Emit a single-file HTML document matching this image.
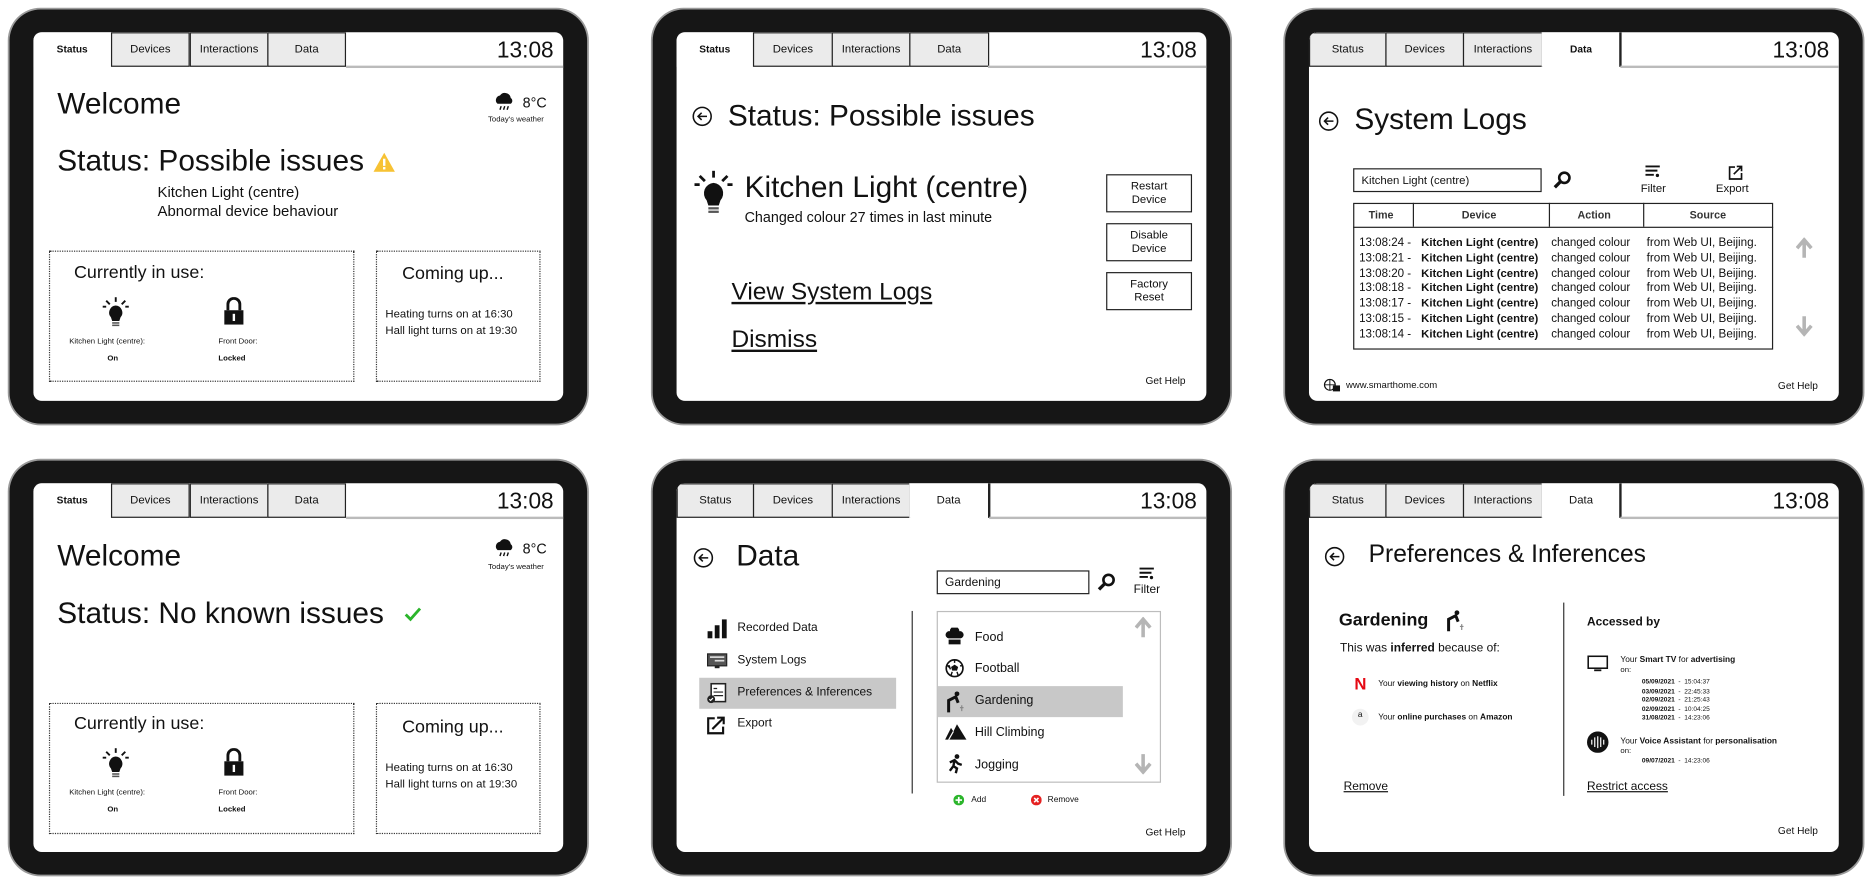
<!DOCTYPE html>
<html><head><meta charset="utf-8"><style>
*{margin:0;padding:0;box-sizing:border-box}
html,body{width:1871px;height:885px;overflow:hidden;background:#fff;font-family:"Liberation Sans",sans-serif;color:#111}
#w{position:absolute;left:0;top:0;width:1568px;height:742px;transform:scale(1.19324);transform-origin:0 0}
.bz{position:absolute;width:484px;height:347px;background:#161616;border-radius:26px;box-shadow:0 0 0 1.5px #9a9a9a}
.sc{position:absolute;width:444px;height:309px;background:#fff;border-radius:7px;overflow:hidden}
.a{position:absolute;line-height:1;white-space:nowrap}
.tab{position:absolute;top:0;height:29px;background:#ebebeb;border:1px solid #222;font-size:9.5px;text-align:center;line-height:27px}
.tab.on{background:#fff;border-color:transparent;font-weight:bold}
.tl{position:absolute;top:28px;height:1.5px;background:#bbb}
.tm{position:absolute;right:8px;top:5px;font-size:19px}
.dot{position:absolute;border:1.3px dotted #333}
.u{text-decoration:underline}
.b{font-weight:bold}
.btn{position:absolute;left:360px;width:72px;height:32px;border:1.3px solid #222;font-size:9.5px;text-align:center;line-height:11px;padding-top:4px}
</style></head><body><div id="w">

<div class="bz" style="left:8px;top:8px"></div>
<div class="bz" style="left:547px;top:8px"></div>
<div class="bz" style="left:1077px;top:8px"></div>
<div class="bz" style="left:8px;top:386px"></div>
<div class="bz" style="left:547px;top:386px"></div>
<div class="bz" style="left:1077px;top:386px"></div>

<!-- T1 -->
<div class="sc" style="left:28px;top:27px">
 <div class="tab on" style="left:0;width:65px;font-size:8.5px">Status</div>
 <div class="tab" style="left:65px;width:66px">Devices</div>
 <div class="tab" style="left:131px;width:66px">Interactions</div>
 <div class="tab" style="left:196px;width:66px">Data</div>
 <div class="tl" style="left:262px;width:182px"></div>
 <div class="tm">13:08</div>
 <div class="a" style="left:20px;top:48px;font-size:25px">Welcome</div>
 <svg class="a" style="left:386px;top:49px" width="18" height="18" viewBox="0 0 18 18"><path d="M3 11a4 4 0 0 1 2-7 5 5 0 0 1 9 2 3 3 0 0 1 0 5z" fill="#111"/><path d="M6 13l-1 3M9 13l-1 3M12 13l-1 3" stroke="#111" stroke-width="1.2"/></svg>
 <div class="a" style="left:410px;top:53px;font-size:12px">8°C</div>
 <div class="a" style="left:381px;top:71px;font-size:6.5px">Today's weather</div>
 <div class="a" style="left:20px;top:96px;font-size:25px">Status: Possible issues</div>
 <svg class="a" style="left:285px;top:101px" width="18" height="16" viewBox="0 0 18 16"><path d="M9 0L18 16H0z" fill="#f7c234"/><rect x="8" y="5" width="2" height="6" fill="#fff"/><rect x="8" y="12" width="2" height="2" fill="#fff"/></svg>
 <div class="a" style="left:104px;top:128px;font-size:12.5px">Kitchen Light (centre)</div>
 <div class="a" style="left:104px;top:144px;font-size:12.5px">Abnormal device behaviour</div>
 <div class="dot" style="left:13px;top:183px;width:256px;height:110px"></div>
 <div class="dot" style="left:287px;top:183px;width:138px;height:110px"></div>
 <div class="a" style="left:34px;top:194px;font-size:15px">Currently in use:</div>
 <svg class="a" style="left:58px;top:222px" width="22" height="26" viewBox="0 0 22 26"><path d="M11 0v4M3 3l3 3M19 3l-3 3M0 8h3M22 8h-3" stroke="#111" stroke-width="1.6"/><path d="M11 7a6 6 0 0 0-4 10l1 3h6l1-3a6 6 0 0 0-4-10z" fill="#111"/><rect x="8" y="21" width="6" height="1.3" fill="#555"/><rect x="8" y="23" width="6" height="1.3" fill="#555"/></svg>
 <svg class="a" style="left:159px;top:222px" width="18" height="24" viewBox="0 0 18 24"><path d="M4 11V6a5 5 0 0 1 10 0v5" stroke="#111" stroke-width="2.4" fill="none"/><rect x="1" y="11" width="16" height="12" fill="#111"/><rect x="8" y="14" width="2" height="6" fill="#fff"/></svg>
 <div class="a" style="left:30px;top:257px;font-size:6.5px">Kitchen Light (centre):</div>
 <div class="a b" style="left:62px;top:271px;font-size:6.5px">On</div>
 <div class="a" style="left:155px;top:257px;font-size:6.5px">Front Door:</div>
 <div class="a b" style="left:155px;top:271px;font-size:6.5px">Locked</div>
 <div class="a" style="left:309px;top:195px;font-size:15px">Coming up...</div>
 <div class="a" style="left:295px;top:232px;font-size:9.5px">Heating turns on at 16:30</div>
 <div class="a" style="left:295px;top:246px;font-size:9.5px">Hall light turns on at 19:30</div>
</div>

<!-- T4 -->
<div class="sc" style="left:28px;top:405px">
 <div class="tab on" style="left:0;width:65px;font-size:8.5px">Status</div>
 <div class="tab" style="left:65px;width:66px">Devices</div>
 <div class="tab" style="left:131px;width:66px">Interactions</div>
 <div class="tab" style="left:196px;width:66px">Data</div>
 <div class="tl" style="left:262px;width:182px"></div>
 <div class="tm">13:08</div>
 <div class="a" style="left:20px;top:49px;font-size:25px">Welcome</div>
 <svg class="a" style="left:386px;top:45px" width="18" height="18" viewBox="0 0 18 18"><path d="M3 11a4 4 0 0 1 2-7 5 5 0 0 1 9 2 3 3 0 0 1 0 5z" fill="#111"/><path d="M6 13l-1 3M9 13l-1 3M12 13l-1 3" stroke="#111" stroke-width="1.2"/></svg>
 <div class="a" style="left:410px;top:49px;font-size:12px">8°C</div>
 <div class="a" style="left:381px;top:68px;font-size:6.5px">Today's weather</div>
 <div class="a" style="left:20px;top:97px;font-size:25px">Status: No known issues</div>
 <svg class="a" style="left:311px;top:104px" width="14" height="12" viewBox="0 0 14 12"><path d="M1 6l4 4 8-9" stroke="#2bb52b" stroke-width="2.4" fill="none"/></svg>
 <div class="dot" style="left:13px;top:184px;width:256px;height:110px"></div>
 <div class="dot" style="left:287px;top:184px;width:138px;height:110px"></div>
 <div class="a" style="left:34px;top:194px;font-size:15px">Currently in use:</div>
 <svg class="a" style="left:58px;top:222px" width="22" height="26" viewBox="0 0 22 26"><path d="M11 0v4M3 3l3 3M19 3l-3 3M0 8h3M22 8h-3" stroke="#111" stroke-width="1.6"/><path d="M11 7a6 6 0 0 0-4 10l1 3h6l1-3a6 6 0 0 0-4-10z" fill="#111"/><rect x="8" y="21" width="6" height="1.3" fill="#555"/><rect x="8" y="23" width="6" height="1.3" fill="#555"/></svg>
 <svg class="a" style="left:159px;top:222px" width="18" height="24" viewBox="0 0 18 24"><path d="M4 11V6a5 5 0 0 1 10 0v5" stroke="#111" stroke-width="2.4" fill="none"/><rect x="1" y="11" width="16" height="12" fill="#111"/><rect x="8" y="14" width="2" height="6" fill="#fff"/></svg>
 <div class="a" style="left:30px;top:257px;font-size:6.5px">Kitchen Light (centre):</div>
 <div class="a b" style="left:62px;top:271px;font-size:6.5px">On</div>
 <div class="a" style="left:155px;top:257px;font-size:6.5px">Front Door:</div>
 <div class="a b" style="left:155px;top:271px;font-size:6.5px">Locked</div>
 <div class="a" style="left:309px;top:197px;font-size:15px">Coming up...</div>
 <div class="a" style="left:295px;top:234px;font-size:9.5px">Heating turns on at 16:30</div>
 <div class="a" style="left:295px;top:248px;font-size:9.5px">Hall light turns on at 19:30</div>
</div>

<!-- T2 -->
<div class="sc" style="left:567px;top:27px">
 <div class="tab on" style="left:0;width:64px;font-size:8.5px">Status</div>
 <div class="tab" style="left:64px;width:67px">Devices</div>
 <div class="tab" style="left:130px;width:66px">Interactions</div>
 <div class="tab" style="left:195px;width:67px">Data</div>
 <div class="tl" style="left:261px;width:183px"></div>
 <div class="tm">13:08</div>
 <svg class="a" style="left:13px;top:62px" width="17" height="17" viewBox="0 0 17 17"><circle cx="8.5" cy="8.5" r="7.5" stroke="#111" stroke-width="1.3" fill="none"/><path d="M12.5 8.5H5M8 5.5l-3 3 3 3" stroke="#111" stroke-width="1.3" fill="none"/></svg>
 <div class="a" style="left:43px;top:58px;font-size:25px">Status: Possible issues</div>
 <svg class="a" style="left:15px;top:116px" width="32" height="38" viewBox="0 0 22 26"><path d="M11 0v4M3 3l3 3M19 3l-3 3M0 8h3M22 8h-3" stroke="#111" stroke-width="1.6"/><path d="M11 7a6 6 0 0 0-4 10l1 3h6l1-3a6 6 0 0 0-4-10z" fill="#111"/><rect x="8" y="21" width="6" height="1.3" fill="#555"/><rect x="8" y="23" width="6" height="1.3" fill="#555"/></svg>
 <div class="a" style="left:57px;top:118px;font-size:25px">Kitchen Light (centre)</div>
 <div class="a" style="left:57px;top:149px;font-size:12px">Changed colour 27 times in last minute</div>
 <div class="btn" style="top:119px">Restart<br>Device</div>
 <div class="btn" style="top:160px">Disable<br>Device</div>
 <div class="btn" style="top:201px">Factory<br>Reset</div>
 <div class="a u" style="left:46px;top:208px;font-size:20.5px">View System Logs</div>
 <div class="a u" style="left:46px;top:248px;font-size:20.5px">Dismiss</div>
 <div class="a" style="left:393px;top:288px;font-size:8.5px">Get Help</div>
</div>

<!-- T3 -->
<div class="sc" style="left:1097px;top:27px">
 <div class="tab" style="left:0;width:65px">Status</div>
 <div class="tab" style="left:64px;width:66px">Devices</div>
 <div class="tab" style="left:129px;width:67px">Interactions</div>
 <div class="tab on" style="left:195px;width:66px;font-size:8.5px">Data</div>
 <div style="position:absolute;left:260px;top:0;width:1.5px;height:29px;background:#222"></div>
 <div class="tl" style="left:261px;width:183px"></div>
 <div class="tm">13:08</div>
 <svg class="a" style="left:8px;top:66px" width="17" height="17" viewBox="0 0 17 17"><circle cx="8.5" cy="8.5" r="7.5" stroke="#111" stroke-width="1.3" fill="none"/><path d="M12.5 8.5H5M8 5.5l-3 3 3 3" stroke="#111" stroke-width="1.3" fill="none"/></svg>
 <div class="a" style="left:38px;top:61px;font-size:25px">System Logs</div>
 <div class="a" style="left:37px;top:114px;width:158px;height:20px;border:1.3px solid #222;font-size:9.5px;padding:5px 0 0 6px">Kitchen Light (centre)</div>
 <svg class="a" style="left:204px;top:116px" width="16" height="16" viewBox="0 0 16 16"><circle cx="10" cy="6" r="4.3" stroke="#111" stroke-width="2.2" fill="none"/><path d="M7 9L2 14" stroke="#111" stroke-width="2.8"/></svg>
 <svg class="a" style="left:281px;top:111px" width="16" height="12" viewBox="0 0 16 12"><path d="M1 1.5h12M1 5h10M1 8.5h7" stroke="#111" stroke-width="1.6"/><circle cx="11" cy="9" r="1.4" fill="#111"/></svg>
 <div class="a" style="left:278px;top:127px;font-size:9.5px">Filter</div>
 <svg class="a" style="left:351px;top:111px" width="13" height="13" viewBox="0 0 13 13"><path d="M6 2H1.5v10h10V7" stroke="#111" stroke-width="1.4" fill="none"/><path d="M5 8l6-6M7.5 1.5H11.5V5.5" stroke="#111" stroke-width="1.4" fill="none"/></svg>
 <div class="a" style="left:341px;top:127px;font-size:9.5px">Export</div>
 <div style="position:absolute;left:37px;top:143px;width:352px;height:123px;border:1.5px solid #222"></div>
 <div style="position:absolute;left:37px;top:163px;width:352px;height:1.3px;background:#222"></div>
 <div style="position:absolute;left:87px;top:143px;width:1.3px;height:20px;background:#222"></div>
 <div style="position:absolute;left:201px;top:143px;width:1.3px;height:20px;background:#222"></div>
 <div style="position:absolute;left:280px;top:143px;width:1.3px;height:20px;background:#222"></div>
 <div class="a b" style="left:50px;top:149px;font-size:9px;color:#333">Time</div>
 <div class="a b" style="left:128px;top:149px;font-size:9px;color:#333">Device</div>
 <div class="a b" style="left:225px;top:149px;font-size:9px;color:#333">Action</div>
 <div class="a b" style="left:319px;top:149px;font-size:9px;color:#333">Source</div>
 <div class="a" style="left:42px;top:171px;font-size:9.7px;line-height:12.8px">13:08:24 -<br>13:08:21 -<br>13:08:20 -<br>13:08:18 -<br>13:08:17 -<br>13:08:15 -<br>13:08:14 -</div>
 <div class="a b" style="left:94px;top:171px;font-size:9.5px;line-height:12.8px">Kitchen Light (centre)<br>Kitchen Light (centre)<br>Kitchen Light (centre)<br>Kitchen Light (centre)<br>Kitchen Light (centre)<br>Kitchen Light (centre)<br>Kitchen Light (centre)</div>
 <div class="a" style="left:203px;top:171px;font-size:9.7px;line-height:12.8px">changed colour<br>changed colour<br>changed colour<br>changed colour<br>changed colour<br>changed colour<br>changed colour</div>
 <div class="a" style="left:283px;top:171px;font-size:9.8px;line-height:12.8px">from Web UI, Beijing.<br>from Web UI, Beijing.<br>from Web UI, Beijing.<br>from Web UI, Beijing.<br>from Web UI, Beijing.<br>from Web UI, Beijing.<br>from Web UI, Beijing.</div>
 <svg class="a" style="left:408px;top:172px" width="14" height="18" viewBox="0 0 14 18"><path d="M7 17V3M1 9l6-7 6 7" stroke="#b5b5b5" stroke-width="3" fill="none"/></svg>
 <svg class="a" style="left:408px;top:237px" width="14" height="18" viewBox="0 0 14 18"><path d="M7 1v14M1 9l6 7 6-7" stroke="#b5b5b5" stroke-width="3" fill="none"/></svg>
 <svg class="a" style="left:12px;top:290px" width="16" height="12" viewBox="0 0 16 12"><circle cx="5.5" cy="5.5" r="4.5" stroke="#111" fill="none"/><path d="M1 5.5h9M5.5 1v9" stroke="#111" stroke-width=".8"/><rect x="8" y="6" width="6" height="5" fill="#111"/></svg>
 <div class="a" style="left:31px;top:292px;font-size:8px">www.smarthome.com</div>
 <div class="a" style="left:393px;top:292px;font-size:8.5px">Get Help</div>
</div>

<!-- T5 -->
<div class="sc" style="left:567px;top:405px">
 <div class="tab" style="left:0;width:65px">Status</div>
 <div class="tab" style="left:64px;width:67px">Devices</div>
 <div class="tab" style="left:130px;width:66px">Interactions</div>
 <div class="tab on" style="left:195px;width:66px;font-weight:normal">Data</div>
 <div style="position:absolute;left:261px;top:0;width:1.5px;height:29px;background:#222"></div>
 <div class="tl" style="left:262px;width:182px"></div>
 <div class="tm">13:08</div>
 <svg class="a" style="left:14px;top:54px" width="17" height="17" viewBox="0 0 17 17"><circle cx="8.5" cy="8.5" r="7.5" stroke="#111" stroke-width="1.3" fill="none"/><path d="M12.5 8.5H5M8 5.5l-3 3 3 3" stroke="#111" stroke-width="1.3" fill="none"/></svg>
 <div class="a" style="left:50px;top:49px;font-size:25px">Data</div>
 <div class="a" style="left:218px;top:73px;width:128px;height:20px;border:1.3px solid #222;font-size:10px;padding:5px 0 0 6px">Gardening</div>
 <svg class="a" style="left:352px;top:75px" width="16" height="16" viewBox="0 0 16 16"><circle cx="10" cy="6" r="4.3" stroke="#111" stroke-width="2.2" fill="none"/><path d="M7 9L2 14" stroke="#111" stroke-width="2.8"/></svg>
 <svg class="a" style="left:387px;top:70px" width="16" height="12" viewBox="0 0 16 12"><path d="M1 1.5h12M1 5h10M1 8.5h7" stroke="#111" stroke-width="1.6"/><circle cx="11" cy="9" r="1.4" fill="#111"/></svg>
 <div class="a" style="left:383px;top:85px;font-size:10px">Filter</div>
 <div style="position:absolute;left:19px;top:163px;width:165px;height:26px;background:#c8c8c8"></div>
 <svg class="a" style="left:25px;top:114px" width="18" height="16" viewBox="0 0 18 16"><rect x="1" y="10" width="4" height="6" fill="#111"/><rect x="7" y="5" width="4" height="11" fill="#111"/><rect x="13" y="0" width="4" height="16" fill="#111"/></svg>
 <svg class="a" style="left:25px;top:142px" width="18" height="14" viewBox="0 0 18 14"><rect x="1" y="1" width="16" height="10" fill="#555" stroke="#222"/><rect x="3" y="3" width="12" height="1.4" fill="#ddd"/><rect x="7" y="6" width="8" height="1.4" fill="#ddd"/><rect x="7" y="11" width="4" height="2" fill="#222"/></svg>
 <svg class="a" style="left:25px;top:167px" width="17" height="19" viewBox="0 0 17 19"><rect x="4" y="1" width="12" height="15" fill="#fff" stroke="#222" stroke-width="1.3"/><path d="M6 5h3M6 8h8M6 11h8" stroke="#222"/><circle cx="4" cy="14" r="3.3" fill="#222"/><path d="M2.5 14l1 1 2-2" stroke="#fff"/></svg>
 <svg class="a" style="left:25px;top:195px" width="16" height="16" viewBox="0 0 16 16"><path d="M7 2H1.5v12.5H14V9" stroke="#111" stroke-width="1.8" fill="none"/><path d="M5 11L14 2M9 1.5h5.5V7" stroke="#111" stroke-width="1.8" fill="none"/></svg>
 <div class="a" style="left:51px;top:117px;font-size:10px">Recorded Data</div>
 <div class="a" style="left:51px;top:144px;font-size:10px">System Logs</div>
 <div class="a" style="left:51px;top:171px;font-size:10px">Preferences &amp; Inferences</div>
 <div class="a" style="left:51px;top:197px;font-size:10px">Export</div>
 <div style="position:absolute;left:197px;top:107px;width:1.3px;height:153px;background:#333"></div>
 <div style="position:absolute;left:218px;top:107px;width:188px;height:144px;border:1.3px solid #bdbdbd"></div>
 <div style="position:absolute;left:219px;top:170px;width:155px;height:26px;background:#c8c8c8"></div>
 <svg class="a" style="left:225px;top:121px" width="16" height="15" viewBox="0 0 16 15"><path d="M3 9a3 3 0 0 1 1-6 4 4 0 0 1 8 0 3 3 0 0 1 1 6z" fill="#111"/><rect x="3" y="10" width="10" height="4" fill="#111"/></svg>
 <svg class="a" style="left:225px;top:147px" width="16" height="16" viewBox="0 0 16 16"><circle cx="8" cy="8" r="7" stroke="#111" stroke-width="1.4" fill="#fff"/><path d="M8 5l3 2-1 3H6L5 7z" fill="#111"/><path d="M1.5 6l2 0 1 3M14.5 6l-2 0M5 14l1-3M11 14l-1-3M8 1v2.5" stroke="#111" stroke-width="1.2"/></svg>
 <svg class="a" style="left:225px;top:174px" width="18" height="19" viewBox="0 0 18 19"><circle cx="10" cy="2.5" r="2" fill="#111"/><path d="M3 18V8l6-3 2 5" stroke="#111" stroke-width="2.5" fill="none"/><path d="M14 12v5M12.5 14h3" stroke="#888"/></svg>
 <svg class="a" style="left:225px;top:201px" width="18" height="14" viewBox="0 0 18 14"><path d="M0 14L5 4l2 3L10 1l8 13z" fill="#111"/><path d="M3 14l4-7" stroke="#fff" stroke-width="1"/></svg>
 <svg class="a" style="left:227px;top:227px" width="14" height="17" viewBox="0 0 14 17"><circle cx="8" cy="2" r="2" fill="#111"/><path d="M2 7l4-2 3 3 3 1M6 5l-1 5 3 2-1 4M5 10l-3 4" stroke="#111" stroke-width="2" fill="none"/></svg>
 <div class="a" style="left:250px;top:124px;font-size:10.5px">Food</div>
 <div class="a" style="left:250px;top:150px;font-size:10.5px">Football</div>
 <div class="a" style="left:250px;top:177px;font-size:10.5px">Gardening</div>
 <div class="a" style="left:250px;top:204px;font-size:10.5px">Hill Climbing</div>
 <div class="a" style="left:250px;top:231px;font-size:10.5px">Jogging</div>
 <svg class="a" style="left:384px;top:112px" width="14" height="18" viewBox="0 0 14 18"><path d="M7 17V3M1 9l6-7 6 7" stroke="#b5b5b5" stroke-width="3" fill="none"/></svg>
 <svg class="a" style="left:384px;top:226px" width="14" height="18" viewBox="0 0 14 18"><path d="M7 1v14M1 9l6 7 6-7" stroke="#b5b5b5" stroke-width="3" fill="none"/></svg>
 <svg class="a" style="left:232px;top:261px" width="9" height="9" viewBox="0 0 10 10"><circle cx="5" cy="5" r="5" fill="#2bb52b"/><path d="M5 2v6M2 5h6" stroke="#fff" stroke-width="1.6"/></svg>
 <div class="a" style="left:247px;top:262px;font-size:7px">Add</div>
 <svg class="a" style="left:297px;top:261px" width="9" height="9" viewBox="0 0 10 10"><circle cx="5" cy="5" r="5" fill="#e52222"/><path d="M3 3l4 4M7 3l-4 4" stroke="#fff" stroke-width="1.5"/></svg>
 <div class="a" style="left:311px;top:262px;font-size:7px">Remove</div>
 <div class="a" style="left:393px;top:288px;font-size:8.5px">Get Help</div>
</div>

<!-- T6 -->
<div class="sc" style="left:1097px;top:405px">
 <div class="tab" style="left:0;width:65px">Status</div>
 <div class="tab" style="left:64px;width:66px">Devices</div>
 <div class="tab" style="left:129px;width:67px">Interactions</div>
 <div class="tab on" style="left:195px;width:66px;font-weight:normal">Data</div>
 <div style="position:absolute;left:260px;top:0;width:1.5px;height:29px;background:#222"></div>
 <div class="tl" style="left:261px;width:183px"></div>
 <div class="tm">13:08</div>
 <svg class="a" style="left:13px;top:53px" width="17" height="17" viewBox="0 0 17 17"><circle cx="8.5" cy="8.5" r="7.5" stroke="#111" stroke-width="1.3" fill="none"/><path d="M12.5 8.5H5M8 5.5l-3 3 3 3" stroke="#111" stroke-width="1.3" fill="none"/></svg>
 <div class="a" style="left:50px;top:50px;font-size:20.6px">Preferences &amp; Inferences</div>
 <div class="a b" style="left:25px;top:107px;font-size:15px">Gardening</div>
 <svg class="a" style="left:114px;top:106px" width="18" height="19" viewBox="0 0 18 19"><circle cx="10" cy="2.5" r="2" fill="#111"/><path d="M3 18V8l6-3 2 5" stroke="#111" stroke-width="2.5" fill="none"/><path d="M14 12v5M12.5 14h3" stroke="#888"/></svg>
 <div class="a" style="left:26px;top:134px;font-size:10px">This was <b>inferred</b> because of:</div>
 <div class="a b" style="left:38px;top:161px;font-size:14px;color:#e50914">N</div>
 <div class="a" style="left:58px;top:165px;font-size:7px">Your <b>viewing history</b> on <b>Netflix</b></div>
 <div style="position:absolute;left:36px;top:189px;width:14px;height:14px;border-radius:50%;background:#f2f2f2"></div>
 <div class="a" style="left:41px;top:191px;font-size:7px">a</div>
 <div class="a" style="left:58px;top:193px;font-size:7px">Your <b>online purchases</b> on <b>Amazon</b></div>
 <div style="position:absolute;left:213px;top:100px;width:1.3px;height:162px;background:#333"></div>
 <div class="a b" style="left:233px;top:112px;font-size:10px">Accessed by</div>
 <svg class="a" style="left:233px;top:144px" width="18" height="15" viewBox="0 0 18 15"><rect x="1" y="1" width="16" height="10" stroke="#111" stroke-width="1.3" fill="none"/><rect x="6" y="12" width="6" height="1.5" fill="#111"/></svg>
 <div class="a" style="left:261px;top:145px;font-size:7px">Your <b>Smart TV</b> for <b>advertising</b></div>
 <div class="a" style="left:261px;top:154px;font-size:6.5px">on:</div>
 <div class="a" style="left:279px;top:164px;font-size:5.5px;line-height:7.6px"><b>05/09/2021</b> &nbsp;- &nbsp;15:04:37<br><b>03/09/2021</b> &nbsp;- &nbsp;22:45:33<br><b>02/09/2021</b> &nbsp;- &nbsp;21:25:43<br><b>02/09/2021</b> &nbsp;- &nbsp;10:04:25<br><b>31/08/2021</b> &nbsp;- &nbsp;14:23:06</div>
 <svg class="a" style="left:233px;top:208px" width="18" height="18" viewBox="0 0 18 18"><circle cx="9" cy="9" r="9" fill="#111"/><path d="M4 7v4M6.5 5v8M9 4v10M11.5 5v8M14 7v4" stroke="#fff" stroke-width="1"/></svg>
 <div class="a" style="left:261px;top:213px;font-size:7px">Your <b>Voice Assistant</b> for <b>personalisation</b></div>
 <div class="a" style="left:261px;top:222px;font-size:6.5px">on:</div>
 <div class="a" style="left:279px;top:231px;font-size:5.5px"><b>09/07/2021</b> &nbsp;- &nbsp;14:23:06</div>
 <div class="a u" style="left:29px;top:250px;font-size:10px">Remove</div>
 <div class="a u" style="left:233px;top:250px;font-size:10px">Restrict access</div>
 <div class="a" style="left:393px;top:287px;font-size:8.5px">Get Help</div>
</div>

</div></body></html>
